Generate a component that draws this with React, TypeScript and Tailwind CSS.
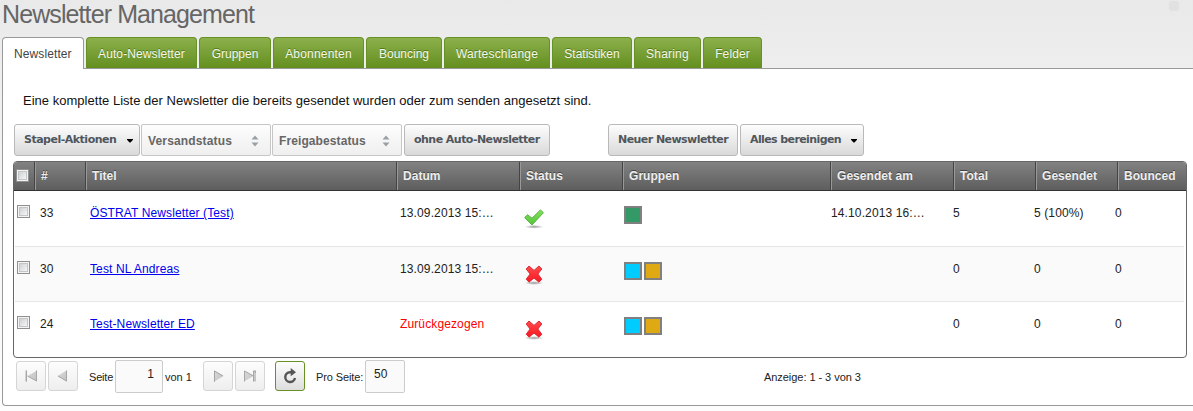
import React from "react";

const tabs = [
  { label: "Auto-Newsletter", cls: "w-[111px] tracking-[0.1px]" },
  { label: "Gruppen", cls: "w-[72px]" },
  { label: "Abonnenten", cls: "w-[91px] tracking-[0.2px]" },
  { label: "Bouncing", cls: "w-[76px]" },
  { label: "Warteschlange", cls: "w-[106px] tracking-[0.2px]" },
  { label: "Statistiken", cls: "w-[80px]" },
  { label: "Sharing", cls: "w-[67px] tracking-[0.2px]" },
  { label: "Felder", cls: "w-[59px] tracking-[0.1px]" },
];

const headers = ["#", "Titel", "Datum", "Status", "Gruppen", "Gesendet am", "Total", "Gesendet", "Bounced"];

type Row = {
  id: string;
  title: string;
  date: string;
  withdrawn?: boolean;
  ok: boolean;
  groups: string[];
  sentAt: string;
  total: string;
  sent: string;
  bounced: string;
};

const rows: Row[] = [
  { id: "33", title: "ÖSTRAT Newsletter (Test)", date: "13.09.2013 15:…", ok: true, groups: ["bg-[#339966]"], sentAt: "14.10.2013 16:…", total: "5", sent: "5 (100%)", bounced: "0" },
  { id: "30", title: "Test NL Andreas", date: "13.09.2013 15:…", ok: false, groups: ["bg-[#00ccff]", "bg-[#dea912]"], sentAt: "", total: "0", sent: "0", bounced: "0" },
  { id: "24", title: "Test-Newsletter ED", date: "Zurückgezogen", withdrawn: true, ok: false, groups: ["bg-[#00ccff]", "bg-[#dea912]"], sentAt: "", total: "0", sent: "0", bounced: "0" },
];

function Checkbox() {
  return (
    <span className="block size-[13px] border border-[#8e8f8f] bg-[#f4f4f4] p-px">
      <span className="block size-full border border-[#c3c6c9] bg-linear-to-br from-[#cfd1d3] to-[#f6f6f6]" />
    </span>
  );
}

function CheckIcon() {
  return (
    <svg width="20" height="20" viewBox="0 0 20 20" className="block">
      <defs>
        <linearGradient id="ok" x1="0" y1="0" x2="0" y2="1">
          <stop offset="0" stopColor="#86e05c" />
          <stop offset="1" stopColor="#55c43a" />
        </linearGradient>
        <radialGradient id="ok-shadow">
          <stop offset="0" stopColor="#000" stopOpacity=".4" />
          <stop offset="1" stopColor="#000" stopOpacity="0" />
        </radialGradient>
      </defs>
      <ellipse cx="10" cy="17.8" rx="9.5" ry="1.9" fill="url(#ok-shadow)" />
      <path d="M0.6 8.6 3.6 5.7 8 9.2 16.4 0.9 19.4 3.7 8 16Z" fill="url(#ok)" stroke="#4fae3c" strokeWidth=".9" strokeLinejoin="round" />
    </svg>
  );
}

function CrossIcon() {
  return (
    <svg width="20" height="20" viewBox="0 0 20 20" className="block">
      <defs>
        <linearGradient id="no" x1="0" y1="0" x2="0" y2="1">
          <stop offset="0" stopColor="#ff4c4c" />
          <stop offset="1" stopColor="#fa1622" />
        </linearGradient>
        <radialGradient id="no-shadow">
          <stop offset="0" stopColor="#000" stopOpacity=".4" />
          <stop offset="1" stopColor="#000" stopOpacity="0" />
        </radialGradient>
      </defs>
      <ellipse cx="10" cy="18" rx="9.5" ry="1.9" fill="url(#no-shadow)" />
      <path d="M5 1 10 5.4 15 1 17.8 4 13.9 9 17.8 14.2 15 17.2 10 13 5 17.2 2.2 14.2 6.1 9 2.2 4Z" fill="url(#no)" stroke="#d4202b" strokeWidth=".9" strokeLinejoin="round" />
    </svg>
  );
}

function Action({ label, width, tracking, menu }: { label: string; width: string; tracking: string; menu?: boolean }) {
  return (
    <button className={`flex h-8 shrink-0 items-center justify-between rounded-[3px] border border-[#b9b9b9] bg-linear-to-b from-[#fdfdfd] to-[#d9d9d9] pl-[9px] font-['DejaVu_Sans',sans-serif] text-[11px] font-bold whitespace-nowrap text-[#50565c] ${width}`}>
      <span className={tracking}>{label}</span>
      {menu && (
        <svg width="6" height="4" viewBox="0 0 6 4" className="mt-px mr-[6px]">
          <path d="M0 0H6V.8L3.5 3.6H2.5L0 .8Z" fill="#000" />
        </svg>
      )}
    </button>
  );
}

function Filter({ label, tracking }: { label: string; tracking: string }) {
  return (
    <button className="flex h-8 w-[130px] shrink-0 items-center justify-between rounded-[2px] border border-[#c6c6c6] bg-linear-to-b from-[#fdfdfd] to-[#efefef] pt-px pr-[11px] pl-[6px] text-[12px] font-bold text-[#666]">
      <span className={tracking}>{label}</span>
      <svg width="8" height="12" viewBox="0 0 8 12">
        <path d="M0.5 4.6 4 0.5 7.5 4.6ZM0.5 7.4H7.5L4 11.5Z" fill="#98a0a6" />
      </svg>
    </button>
  );
}

function PageButton({ kind }: { kind: "first" | "prev" | "next" | "last" }) {
  return (
    <button className="flex size-[30px] shrink-0 items-center justify-center rounded-[3px] border border-[#d5d5d5] bg-linear-to-b from-[#fdfdfd] to-[#eeeeee]">
      <svg width="14" height="14" viewBox="0 0 14 14">
        <defs>
          <linearGradient id="pg" x1="0" y1="0" x2="1" y2="1">
            <stop offset="0" stopColor="#dadada" />
            <stop offset="1" stopColor="#c2c2c2" />
          </linearGradient>
        </defs>
        {kind === "first" && <path d="M1 1.5H3V12.5H1ZM13 1.5V12.5L3.5 7Z" fill="url(#pg)" />}
        {kind === "first" && <path d="M2.5 1.5V12.5M3.5 7 12.5 12V1.5" fill="none" stroke="#a6a6a6" />}
        {kind === "prev" && <path d="M11 1.2V12.8L1.5 7Z" fill="url(#pg)" />}
        {kind === "prev" && <path d="M10.5 1.5V12L2 7" fill="none" stroke="#a6a6a6" />}
        {kind === "next" && <path d="M3 1.2 12.5 7 3 12.8Z" fill="url(#pg)" />}
        {kind === "next" && <path d="M12 7 3.5 2V12.8" fill="none" stroke="#a3a3a3" />}
        {kind === "last" && <path d="M1 1.5 10.5 7 1 12.5ZM10.5 1.5H13V12.5H10.5Z" fill="url(#pg)" />}
        {kind === "last" && <path d="M10.5 7 1.5 2V12.5M10.5 12.5V2H12.5V4" fill="none" stroke="#a6a6a6" />}
      </svg>
    </button>
  );
}

export default function App() {
  return (
    <div className="flex h-[411px] w-[1193px] flex-col overflow-hidden bg-linear-to-b from-[#e9e9e9] via-[#eeeeee] via-17% to-[#fdfdfd] font-['Liberation_Sans',Arial,sans-serif] text-[12px] text-[#222]">
      <header className="flex h-[37px] shrink-0 items-start justify-between pr-[14px] pl-[2px]">
        <h1 className="text-[25px] leading-[28px] tracking-[-0.9px] text-[#666]">Newsletter Management</h1>
        <span className="mt-px size-[10px] rounded-[3px] bg-[#e1e1e1]" />
      </header>

      <nav className="z-10 -mb-px flex h-8 shrink-0 items-start gap-[2px] pl-[2px]">
        <div className="h-8 w-[82px] rounded-t-[4px] border border-b-0 border-[#999] bg-white pt-[8px] pl-[11px] leading-[16px] tracking-[0.1px] text-[#444]">
          Newsletter
        </div>
        {tabs.map((t) => (
          <div key={t.label} className={`h-[31px] rounded-t-[4px] border border-b-0 border-[#679124] bg-linear-to-b from-[#8cb04c] to-[#648f1c] pt-[8px] text-center leading-[16px] text-[#f4f8ec] [text-shadow:0_-1px_0_#55791a] ${t.cls}`}>
            {t.label}
          </div>
        ))}
      </nav>

      <main className="ml-[2px] flex h-[338px] shrink-0 flex-col rounded-bl-[4px] border border-r-0 border-[#999] bg-white">
        <p className="mt-[24px] ml-5 text-[13px] leading-[16px] tracking-[0.02px] text-[#111]">
          Eine komplette Liste der Newsletter die bereits gesendet wurden oder zum senden angesetzt sind.
        </p>

        <div className="mt-[15px] ml-[11px] flex">
          <Action label="Stapel-Aktionen" width="w-[126px]" tracking="tracking-[-0.5px]" menu />
          <div className="ml-px flex gap-px">
            <Filter label="Versandstatus" tracking="tracking-[0.15px]" />
            <Filter label="Freigabestatus" tracking="tracking-[0.1px]" />
          </div>
          <div className="ml-[2px]">
            <Action label="ohne Auto-Newsletter" width="w-[146px]" tracking="tracking-[-0.53px]" />
          </div>
          <div className="ml-[58px] flex gap-[2px]">
            <Action label="Neuer Newswletter" width="w-[130px]" tracking="tracking-[-0.55px]" />
            <Action label="Alles bereinigen" width="w-[124px]" tracking="tracking-[-0.6px]" menu />
          </div>
        </div>

        <div className="mt-[5px] ml-[10px] h-[197px] w-[1174px] shrink-0 overflow-hidden rounded-[4px] border border-[#666]">
          <div className="grid h-[29px] grid-cols-[21px_51px_311px_123px_103px_208px_123px_82px_82px_1fr] border-b border-[#333] bg-linear-to-b from-[#828282] to-[#5e5e5e] font-bold tracking-[0.05px] text-[#eee] [text-shadow:0_-1px_0_#444]">
            <div className="border-r border-[#444] pt-[7px] pl-[2px]">
              <Checkbox />
            </div>
            {headers.map((h) => (
              <div key={h} className="border-r border-l border-r-[#444] border-l-[#999] pl-[5px] leading-[28px] last:border-r-0">
                {h}
              </div>
            ))}
          </div>
          {rows.map((r, i) => (
            <div key={r.id} className={`ml-px grid w-[1169px] grid-cols-[25px_50px_310px_124px_100px_207px_122px_81px_81px_1fr] leading-[16px] tracking-[0.12px] ${i === 0 ? "h-[56px] border-b border-[#e5e5e5]" : i === 1 ? "h-[55px] border-b border-[#e5e5e5] bg-[#fafafa]" : "h-[55px]"}`}>
              <div className="pt-[14px] pl-[2px]">
                <Checkbox />
              </div>
              <div className="pt-[14px]">{r.id}</div>
              <div className="pt-[14px]">
                <a href="#" className="text-[#0000ee] underline">{r.title}</a>
              </div>
              <div className={r.withdrawn ? "pt-[14px] text-[#f00]" : "pt-[14px]"}>{r.date}</div>
              <div className="pt-[18px]">{r.ok ? <CheckIcon /> : <CrossIcon />}</div>
              <div className="flex gap-[2px] pt-[15px]">
                {r.groups.map((g) => (
                  <span key={g} className={`size-[18px] border-2 border-[#808080] ${g}`} />
                ))}
              </div>
              <div className="pt-[14px]">{r.sentAt}</div>
              <div className="pt-[14px]">{r.total}</div>
              <div className="pt-[14px]">{r.sent}</div>
              <div className="pt-[14px]">{r.bounced}</div>
            </div>
          ))}
        </div>

        <div className="mt-[2px] flex h-[33px] items-start pl-[13px] text-[11px] leading-[33px]">
          <div className="mt-px flex gap-[2px]">
            <PageButton kind="first" />
            <PageButton kind="prev" />
          </div>
          <span className="ml-[11px] w-[26px] pt-px tracking-[-0.2px] whitespace-nowrap">Seite</span>
          <div className="h-[33px] w-[48px] rounded-[2px] border border-[#ccc] bg-[#fafafa] pr-[8px] text-right text-[12px] leading-[27px]">1</div>
          <span className="ml-[2px] w-[38px] pt-px whitespace-nowrap">von 1</span>
          <div className="mt-px flex gap-[2px]">
            <PageButton kind="next" />
            <PageButton kind="last" />
          </div>
          <button className="mt-px ml-[10px] flex size-[30px] items-center justify-center rounded-[3px] border border-[#679124] bg-linear-to-b from-[#fdfdfd] to-[#dedede]">
            <svg width="14" height="16" viewBox="0 0 14 16">
              <path d="M8.5 4.2H7A4.9 4.9 0 1 0 12 10" fill="none" stroke="#555" strokeWidth="2.4" />
              <path d="M7.7 0 13 4.2 7.7 8.2Z" fill="#555" />
            </svg>
          </button>
          <span className="ml-[11px] w-[49px] pt-px tracking-[-0.1px] whitespace-nowrap">Pro Seite:</span>
          <div className="h-[33px] w-[40px] rounded-[2px] border border-[#ccc] bg-[#fafafa] pl-[8px] text-[12px] leading-[27px]">50</div>
          <span className="ml-[359px] pt-px tracking-[-0.05px] whitespace-nowrap">Anzeige: 1 - 3 von 3</span>
        </div>
      </main>
    </div>
  );
}
